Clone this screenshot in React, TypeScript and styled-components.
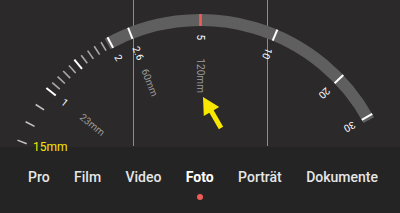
import React from 'react'
import styled, {createGlobalStyle} from 'styled-components'

const GlobalStyle = createGlobalStyle`
  html, body {
    margin: 0;
    padding: 0;
    background: #242424;
  }
  body {
    font-family: Roboto, "Noto Sans", sans-serif;
  }
`

const Screen = styled.div`
  width: 400px;
  height: 213px;
  display: flex;
  flex-direction: column;
  background: #242424;
  overflow: hidden;`

const Viewfinder = styled.div`
  height: 147px;
  flex-shrink: 0;
  background: #2b2929;`

const Dial = styled.svg`
  display: block;
  width: 400px;
  height: 147px;
  overflow: visible;`

const Guide = styled.line`
  stroke: #8c8c8c;
  stroke-width: 1;`

const Band = styled.path`
  fill: none;
  stroke: #5f5f5f;
  stroke-width: 12;`

const Tick = styled.line<{ $tone: 'major' | 'minor' | 'low' | 'red' }>`
  stroke: ${p => p.$tone === 'red' ? '#ef5b55' : p.$tone === 'major' ? '#ffffff' : p.$tone === 'low' ? 'rgba(255,255,255,0.72)' : 'rgba(255,255,255,0.6)'};
  stroke-width: ${p => p.$tone === 'red' ? 2.8 : p.$tone === 'major' ? 2 : 1.6};`

const Label = styled.text<{ $dim?: boolean }>`
  font-family: Roboto, "Noto Sans", sans-serif;
  font-size: 10px;
  fill: ${p => p.$dim ? '#9c9c9c' : '#ffffff'};
  dominant-baseline: central;`

const Current = styled.text`
  font-family: Roboto, "Noto Sans", sans-serif;
  font-size: 12px;
  fill: #f4e600;`

const ModeBar = styled.nav`
  flex: 1;
  display: flex;
  justify-content: center;
  align-items: flex-start;
  gap: 24.4px;
  padding: 22px 0 0 6px;`

const Mode = styled.div<{ $active?: boolean }>`
  display: flex;
  flex-direction: column;
  align-items: center;
  font-size: 14px;
  line-height: 16px;
  font-weight: ${p => p.$active ? 700 : 500};
  color: ${p => p.$active ? '#ffffff' : '#e6e6e6'};`

const Dot = styled.span`
  width: 6px;
  height: 6px;
  margin-top: 9px;
  border-radius: 50%;
  background: #f25c57;`

const CX = 200.5
const CY = 211.5
const R = 191.5

const polar = (r: number, deg: number): [number, number] => {
    const a = deg * Math.PI / 180
    return [CX + r * Math.sin(a), CY - r * Math.cos(a)]
}

type TickType = { deg: number, tone: 'major' | 'minor' | 'low' | 'red', half: number }

const ticks: TickType[] = [
    {deg: -68.7, tone: 'low', half: 5},
    {deg: -62.85, tone: 'low', half: 5},
    {deg: -57, tone: 'low', half: 5},
    ...Array.from({length: 11}, (_, i) => ({
        deg: -51.3 + i * 2.32,
        tone: (i === 0 || i === 5 || i === 10 ? 'major' : 'minor') as TickType['tone'],
        half: i === 0 || i === 5 || i === 10 ? 6 : 5,
    })),
    {deg: -21.5, tone: 'major', half: 6},
    {deg: 0, tone: 'red', half: 6},
    {deg: 22.9, tone: 'major', half: 6},
    {deg: 46.3, tone: 'major', half: 6},
    {deg: 60.4, tone: 'major', half: 6},
]

const zoomLabels = [
    {deg: -51.3, text: '1'},
    {deg: -28.1, text: '2'},
    {deg: -21.5, text: '2.6'},
    {deg: 0, text: '5'},
    {deg: 22.9, text: '10'},
    {deg: 46.3, text: '20'},
    {deg: 60.4, text: '30'},
]

const focalLabels = [
    {deg: -51.3, text: '23mm'},
    {deg: -21.5, text: '60mm'},
    {deg: 0, text: '120mm'},
]

const modes = ['Pro', 'Film', 'Video', 'Foto', 'Porträt', 'Dokumente']

function bandPath() {
    const [x1, y1] = polar(R, -29)
    const [x2, y2] = polar(R, 61.5)
    return `M ${x1} ${y1} A ${R} ${R} 0 0 1 ${x2} ${y2}`
}

function ZoomDial() {
    return (
        <Dial viewBox="0 0 400 147">
            <Guide x1={133.5} y1={0} x2={133.5} y2={146}/>
            <Guide x1={267.5} y1={0} x2={267.5} y2={146}/>
            <Band d={bandPath()}/>
            {ticks.map((t, i) => {
                const [x1, y1] = polar(R - t.half, t.deg)
                const [x2, y2] = polar(R + t.half, t.deg)
                return <Tick key={i} $tone={t.tone} x1={x1} y1={y1} x2={x2} y2={y2}/>
            })}
            {zoomLabels.map(l => {
                const [x, y] = polar(177, l.deg)
                return <Label key={l.text} x={x} y={y} transform={`rotate(${l.deg + 90} ${x} ${y})`}>{l.text}</Label>
            })}
            {focalLabels.map(l => {
                const [x, y] = polar(153, l.deg)
                return <Label key={l.text} $dim x={x} y={y} transform={`rotate(${l.deg + 90} ${x} ${y})`}>{l.text}</Label>
            })}
            <Current x={33} y={151}>15mm</Current>
            {/* pointer */}
            <polygon fill="#f8e800"
                     points="203,97 219.2,107.1 213.65,110.35 223.15,126.75 218.85,129.25 209.35,112.85 203.8,116.1"/>
        </Dial>
    )
}

function App() {
    return (
        <Screen>
            <GlobalStyle/>
            <Viewfinder>
                <ZoomDial/>
            </Viewfinder>
            <ModeBar>
                {modes.map(m => (
                    <Mode key={m} $active={m === 'Foto'}>
                        {m}
                        {m === 'Foto' && <Dot/>}
                    </Mode>
                ))}
            </ModeBar>
        </Screen>
    )
}

export default App
